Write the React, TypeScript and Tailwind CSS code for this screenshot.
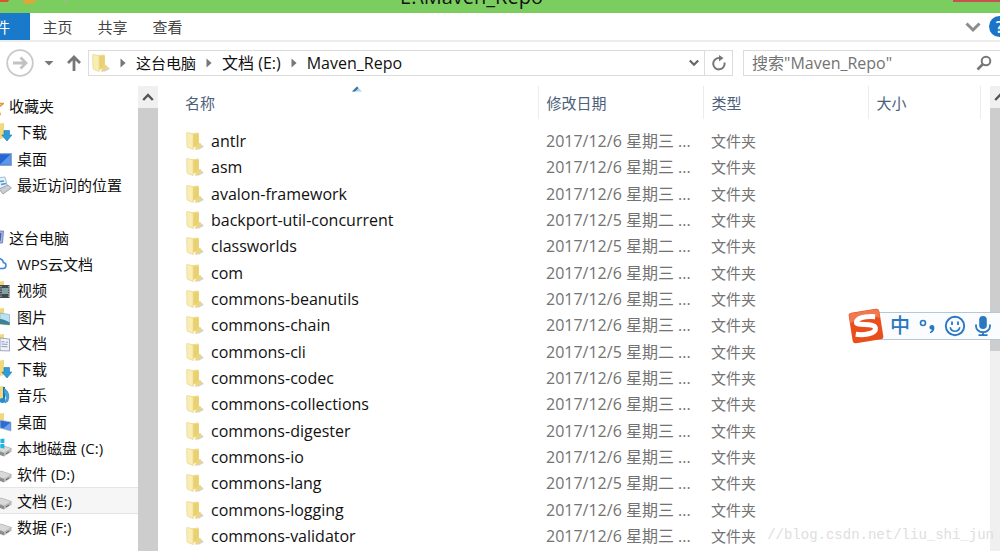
import React from 'react';

type NavIcon = 'star' | 'download' | 'desktop' | 'recent' | 'pc' | 'cloud' | 'video' | 'picture' | 'document' | 'music' | 'desktopFolder' | 'system' | 'drive';

interface NavItem {
  label: string;
  icon: NavIcon;
  root?: boolean;
  active?: boolean;
}

const favorites: NavItem[] = [
  { label: '收藏夹', icon: 'star', root: true },
  { label: '下载', icon: 'download' },
  { label: '桌面', icon: 'desktop' },
  { label: '最近访问的位置', icon: 'recent' },
];

const computer: NavItem[] = [
  { label: '这台电脑', icon: 'pc', root: true },
  { label: 'WPS云文档', icon: 'cloud' },
  { label: '视频', icon: 'video' },
  { label: '图片', icon: 'picture' },
  { label: '文档', icon: 'document' },
  { label: '下载', icon: 'download' },
  { label: '音乐', icon: 'music' },
  { label: '桌面', icon: 'desktopFolder' },
  { label: '本地磁盘 (C:)', icon: 'system' },
  { label: '软件 (D:)', icon: 'drive' },
  { label: '文档 (E:)', icon: 'drive', active: true },
  { label: '数据 (F:)', icon: 'drive' },
];

const DAY_5 = '2017/12/5 星期二 ...';
const DAY_6 = '2017/12/6 星期三 ...';

const folders = [
  { name: 'antlr', date: DAY_6 },
  { name: 'asm', date: DAY_6 },
  { name: 'avalon-framework', date: DAY_6 },
  { name: 'backport-util-concurrent', date: DAY_5 },
  { name: 'classworlds', date: DAY_5 },
  { name: 'com', date: DAY_6 },
  { name: 'commons-beanutils', date: DAY_6 },
  { name: 'commons-chain', date: DAY_6 },
  { name: 'commons-cli', date: DAY_5 },
  { name: 'commons-codec', date: DAY_6 },
  { name: 'commons-collections', date: DAY_6 },
  { name: 'commons-digester', date: DAY_6 },
  { name: 'commons-io', date: DAY_6 },
  { name: 'commons-lang', date: DAY_5 },
  { name: 'commons-logging', date: DAY_6 },
  { name: 'commons-validator', date: DAY_6 },
];

const FolderIcon = () => (
  <svg className="block h-5 w-[18px] shrink-0" viewBox="0 0 18 20">
    <path d="M12 14.5l4-.8 1.8 2.4L13 18.6H9z" fill="#c4c8cd" opacity="0.8" />
    <path d="M5 2.4L12 1.6Q12.800 1.600 12.800 2.400V14.600L6 17.500z" fill="#f0da83" />
    <path d="M7.500 3.500L12.800 3V14L7.500 16z" fill="#e9d070" />
    <path d="M11.500 12.600l3-.6 1.200 3.200-4 2.800-3 .4z" fill="#ecd57a" />
    <path d="M.6 2.200Q.6 1.400 1.400 1.500L6.200 2.600Q7.200 2.900 7.200 4V18.600L1.800 16.400Q1 16 1 15.200z" fill="#f9edb4" stroke="#e6d080" strokeWidth="0.6" />
  </svg>
);

const BackFolder = () => (
  <>
    <path d="M3 2l9-1v15l-9 2z" fill="#f0d87c" />
    <path d="M3 2l5 1.5v15L3 17z" fill="#f8e9a6" />
  </>
);

const DownArrow = () => <path d="M12 8.5h5.500V13h2.400L15 19 9.800 13H12z" fill="#2f9bd8" stroke="#1c78b4" strokeWidth="0.6" />;

const DriveBody = () => (
  <>
    <path d="M2 11l7-4 10.5 3.5L12 15z" fill="#d9d9d9" stroke="#a3a3a3" strokeWidth="0.6" />
    <path d="M2 11l10 4v3.6L2 14.6z" fill="#8e8e8e" />
    <path d="M12 15l7.5-4.5v3.3L12 18.6z" fill="#b7b7b7" />
    <path d="M14 15.8l3-1.8" stroke="#5e5e5e" strokeWidth="1" />
  </>
);

const navIcons: Record<NavIcon, React.ReactNode> = {
  star: <path d="M10 2l2.4 5.4 7 .2-5.2 4 1.8 6.4-6-3.6L4 18l1.6-6.4L1 7.6l6.6-.2z" fill="#fff3d6" stroke="#e09a3a" strokeWidth="1.5" />,
  download: <><BackFolder /><DownArrow /></>,
  desktop: (
    <>
      <path d="M0 4h20v13H0z" fill="#8fa6c6" />
      <path d="M0 5.2h18.6v10.4H0z" fill="#2467d2" />
      <path d="M8 15.6L18.6 5.2v10.4z" fill="#5b97ee" />
    </>
  ),
  recent: (
    <>
      <path d="M4 3l9-1 3 11-10 3z" fill="#e6f1f8" stroke="#8fb0c4" strokeWidth="0.8" />
      <path d="M8 6.5l4-.6M9 9.5l5-1" stroke="#4b9ccb" strokeWidth="1.5" />
      <path d="M7 14l9-4 3.4 3-8.4 6z" fill="#c8ced3" stroke="#838c93" strokeWidth="0.7" />
    </>
  ),
  pc: (
    <>
      <path d="M1 3h18.5l-1 12H1z" fill="#aab4d8" stroke="#6b74a8" strokeWidth="0.8" />
      <path d="M1 5h16.4l-.8 8H1z" fill="#3b62c4" />
    </>
  ),
  cloud: <path d="M5 14.500h5.500a3 3 0 0 0 .8-6A4.500 4.500 0 0 0 3.500 6" fill="none" stroke="#3f83d6" strokeWidth="1.500" />,
  video: (
    <>
      <BackFolder />
      <path d="M8 5h9.5v13H8z" fill="#414a50" />
      <path d="M10 8h6v6h-6z" fill="#7ea2a6" />
      <path d="M9 6v11M16.8 6v11" stroke="#d6dadb" strokeDasharray="1.2 1.2" />
    </>
  ),
  picture: (
    <>
      <BackFolder />
      <path d="M8 6l9.5 1.5V18L8 17z" fill="#b9e0f3" stroke="#98aab5" strokeWidth="0.7" />
      <path d="M8 12q4 0 9.5 3.6V18L8 17z" fill="#3e8a74" />
      <path d="M8 12.5q4 .4 9.5 3.2v1.2L8 14.6z" fill="#3c7cb4" />
    </>
  ),
  document: (
    <>
      <BackFolder />
      <path d="M8 5l9.5 1v12L8 17.6z" fill="#eef1fa" stroke="#8c93ae" strokeWidth="0.8" />
      <path d="M9.5 8.6l3 .3M9.5 11l6 .4M9.5 13.5l6 .3M14 9.2h2" stroke="#8790ad" strokeWidth="0.9" />
    </>
  ),
  music: (
    <>
      <BackFolder />
      <path d="M12 2v12" stroke="#1b77b8" strokeWidth="2" />
      <path d="M12 3q7 5 4 13l-3 2q3-6-1-10z" fill="#46a6dd" stroke="#1b77b8" strokeWidth="0.6" />
      <ellipse cx="10.5" cy="15.5" rx="3" ry="2.4" fill="#2a8cca" />
    </>
  ),
  desktopFolder: (
    <>
      <BackFolder />
      <path d="M8 8l11 2v9L8 16z" fill="#2e6bd0" stroke="#b5c3d9" strokeWidth="0.8" />
      <path d="M11 16.4l7.4-6v8z" fill="#6ba0ec" />
    </>
  ),
  system: (
    <>
      <DriveBody />
      <path d="M4 1.5l3.6-.4v4H4zM8.4 1l4-.5v4.6h-4zM4 6h3.6v4L4 9.6zM8.4 6h4v4.6l-4-.5z" fill="#1fb4e6" />
      <path d="M5 13.6l3 1.2" stroke="#45b649" strokeWidth="1.6" />
    </>
  ),
  drive: <DriveBody />,
};

const NavLink = ({ item }: { item: NavItem }) => (
  <a
    href="#"
    aria-current={item.active ? 'page' : undefined}
    className={
      'flex min-h-0 flex-1 items-center gap-[5px] whitespace-nowrap border-y ' +
      (item.active ? 'border-[#e4e4e4] bg-[#f6f6f6]' : 'border-transparent')
    }
  >
    <svg className={'h-5 w-5 shrink-0 ' + (item.root ? '-ml-4' : '-ml-2')} viewBox="0 0 20 20">
      {navIcons[item.icon]}
    </svg>
    {item.label}
  </a>
);

const CrumbArrow = () => (
  <svg className="h-2.5 w-1.5 shrink-0" viewBox="0 0 6 10">
    <path d="M.5 0.5L5.6 5 .5 9.5z" fill="#777" />
  </svg>
);

const ScrollUp = () => (
  <button aria-label="向上滚动" className="flex h-[22px] w-5 shrink-0 items-center justify-center bg-[#f0f0f0]">
    <svg className="h-2.5 w-3" viewBox="0 0 12 10" fill="none" stroke="#555" strokeWidth="2.4">
      <path d="M1.2 8L6 3l4.8 5" />
    </svg>
  </button>
);

const ImeBar = () => (
  <div className="absolute right-0 top-[308px] flex h-9 w-[152px] items-center">
    <div className="absolute inset-y-1 left-4 right-0 border-y border-[#b4c8d8] bg-[#fafcfe]" />
    <svg className="relative h-9 w-9 shrink-0" viewBox="0 0 36 36">
      <g transform="rotate(-9 18 18)">
        <rect x="2.5" y="2.5" width="31" height="31" rx="3" fill="#e94e1b" />
        <path d="M3 5.500Q3 3 5.500 3H30.500Q33 3 33 5.500V12Q18 4 3 13z" fill="#f0794f" />
        <path d="M28.500 10.200Q12 6.800 9.200 12.400C7.600 17 26.600 15.600 27 21.400 26.800 27.400 14 26.800 6.600 24.600" fill="none" stroke="#fff" strokeWidth="5" />
      </g>
    </svg>
    <button className="relative ml-1 w-6 text-center text-[20px] font-medium leading-7 text-[#2a78c2]">中</button>
    <button aria-label="中文标点" className="relative ml-1.5">
      <svg className="h-5 w-5" viewBox="0 0 20 20">
        <circle cx="5" cy="7" r="2.500" fill="none" stroke="#2a78c2" strokeWidth="1.600" />
        <path d="M12.800 9.200q3.600-.8 3.600 2.800 0 4-4.200 5.200l-.4-1.200q2-.8 2-2.600-2.400.2-2.400-2 0-1.800 1.400-2.200z" fill="#2a78c2" />
      </svg>
    </button>
    <button aria-label="表情" className="relative ml-1.5">
      <svg className="h-[22px] w-[22px]" viewBox="0 0 22 22" fill="none" stroke="#2a78c2">
        <circle cx="11" cy="11" r="9.200" strokeWidth="1.900" />
        <path d="M8 6.500v3.500M14 6.500v3.500" strokeWidth="1.800" />
        <path d="M6.200 12.200q1 4 4.800 4t4.800-4" strokeWidth="1.600" />
      </svg>
    </button>
    <button aria-label="语音输入" className="relative ml-2">
      <svg className="h-[22px] w-[18px]" viewBox="0 0 18 22">
        <rect x="5.200" y="1" width="7.600" height="13" rx="3.800" fill="#2a78c2" />
        <path d="M2 9.500v1.700a7 6 0 0 0 14 0V9.500M9 17v3M4.500 20.200h9" fill="none" stroke="#2a78c2" strokeWidth="1.800" />
      </svg>
    </button>
  </div>
);

const App: React.FC = () => {
  return (
    <div className="relative flex h-screen flex-col overflow-hidden bg-white font-['Open_Sans','Noto_Sans_CJK_SC',sans-serif] text-[15px] leading-5 text-[#111]">
      {/* Title bar */}
      <header className="relative flex h-[13px] shrink-0 items-end justify-center overflow-hidden bg-[#7bcd60]">
        <svg className="absolute left-0 top-0 h-1.5 w-[70px]" viewBox="0 0 70 6">
          <path d="M0 0h9l-1 2H0z" fill="#d9532c" />
          <path d="M23 0h11l3 2-7 2h-6z" fill="#d9a93c" />
          <path d="M65.500 0v4" stroke="#a9b3a2" />
        </svg>
        <h1 className="mb-1 mr-[57px] text-[20px] leading-6">E:\Maven_Repo</h1>
        <button aria-label="关闭" className="absolute right-0 top-0 h-0.5 w-[47px] bg-[#c75050]" />
      </header>

      {/* Ribbon tabs */}
      <nav className="flex h-[29px] shrink-0 items-stretch border-b-2 border-[#ececec] text-[#444]">
        <button className="-ml-5 w-[50px] whitespace-nowrap bg-[#1979ca] text-left text-white">文件</button>
        <button className="w-[55px]">主页</button>
        <button className="w-[55px]">共享</button>
        <button className="w-[55px]">查看</button>
        <div className="-mr-2.5 ml-auto flex items-center gap-2">
          <button aria-label="展开功能区">
            <svg className="h-3 w-4" viewBox="0 0 16 12" fill="none" stroke="#8c8c8c" strokeWidth="3">
              <path d="M1.500 2.500L8 9l6.500-6.500" />
            </svg>
          </button>
          <button aria-label="帮助" className="h-[21px] w-[21px] rounded-full bg-[#1b74c9] text-[16px] font-semibold text-white">?</button>
        </div>
      </nav>

      {/* Address row */}
      <div className="flex h-11 shrink-0 items-center pb-0.5">
        <button aria-label="前进" className="ml-1.5">
          <svg className="h-7 w-7" viewBox="0 0 28 28" fill="none">
            <circle cx="14" cy="14" r="12.800" stroke="#c9c9c9" strokeWidth="1.800" />
            <path d="M7 14h12M14.500 8.500L20 14l-5.500 5.500" stroke="#c2c2c2" strokeWidth="2.800" />
          </svg>
        </button>
        <button aria-label="最近浏览的位置" className="ml-2.5">
          <svg className="h-2 w-2.5" viewBox="0 0 10 8">
            <path d="M.5 2h9L5 6.500z" fill="#777" />
          </svg>
        </button>
        <button aria-label="上移" className="ml-3">
          <svg className="h-[18px] w-4" viewBox="0 0 16 18" fill="none" stroke="#777" strokeWidth="2.800">
            <path d="M8 17V3M2 9l6-6 6 6" />
          </svg>
        </button>
        <div className="ml-1.5 flex h-[26px] flex-1 items-center border border-[#dcdcdc]">
          <div className="ml-[3px] flex flex-1 items-center gap-2.5 whitespace-nowrap">
            <FolderIcon />
            <CrumbArrow />
            <button>这台电脑</button>
            <CrumbArrow />
            <button className="text-[16px]">文档 (E:)</button>
            <CrumbArrow />
            <button className="text-[16px]">Maven_Repo</button>
          </div>
          <button aria-label="以前的位置" className="flex w-5 justify-center">
            <svg className="h-2 w-2.5" viewBox="0 0 10 8" fill="none" stroke="#666" strokeWidth="2.200">
              <path d="M.8 1.500L5 5.800l4.200-4.300" />
            </svg>
          </button>
          <button aria-label="刷新" className="flex h-full w-7 items-center justify-center border-l border-[#dcdcdc]">
            <svg className="h-4 w-4" viewBox="0 0 16 16" fill="none" stroke="#777" strokeWidth="2">
              <path d="M13.500 7.500A5.700 5.700 0 1 1 8.500 3" />
              <path d="M8 0l4.500 3L8 6.500z" fill="#777" stroke="none" />
            </svg>
          </button>
        </div>
        <div className="ml-2.5 flex h-[26px] w-[257px] items-center border border-r-0 border-[#dcdcdc]">
          <label htmlFor="search" className="sr-only">搜索</label>
          <input id="search" type="text" placeholder={'搜索"Maven_Repo"'} className="ml-2 min-w-0 flex-1 bg-transparent text-[16px] leading-5 outline-none placeholder:text-[#737373]" />
          <button aria-label="搜索" className="mr-2">
            <svg className="h-4 w-4" viewBox="0 0 16 16" fill="none" stroke="#777" strokeWidth="2">
              <circle cx="10" cy="6" r="4.300" />
              <path d="M7 9l-5.500 5.500" strokeWidth="2.600" />
            </svg>
          </button>
        </div>
      </div>

      <div className="flex min-h-0 flex-1">
        {/* Navigation pane */}
        <aside className="w-[138px] shrink-0 pt-[7px]">
          <div className="flex h-[447px] flex-col">
            {favorites.map((item) => <NavLink key={item.label} item={item} />)}
            <div className="flex-1 border-y border-transparent" />
            {computer.map((item) => <NavLink key={item.label} item={item} />)}
          </div>
        </aside>
        <div className="flex w-5 shrink-0 flex-col">
          <ScrollUp />
          <div className="flex-1 bg-[#cdcdcd]" />
        </div>

        {/* File list */}
        <main className="relative min-w-0 flex-1 overflow-hidden">
          <svg className="absolute left-[194px] top-0 h-1.5 w-2.5" viewBox="0 0 10 6">
            <path d="M0 5.500L5 .5l5 5z" fill="#a9d3ee" />
            <path d="M0 5.500L5 .5l1.500 1.500L3 5.500z" fill="#3f7296" />
          </svg>
          <table className="w-full table-fixed border-collapse text-left">
            <colgroup>
              <col />
              <col className="w-[165px]" />
              <col className="w-[165px]" />
              <col className="w-[112px]" />
              <col className="w-2.5" />
            </colgroup>
            <thead className="text-[#4c607a]">
              <tr className="h-[33px]">
                <th className="border-r border-[#ececec] p-0 pl-[27px] font-normal">名称</th>
                <th className="border-r border-[#ececec] p-0 pl-2 font-normal">修改日期</th>
                <th className="border-r border-[#ececec] p-0 pl-2 font-normal">类型</th>
                <th className="border-r border-[#ececec] p-0 pl-2 font-normal">大小</th>
                <th className="p-0" />
              </tr>
            </thead>
          </table>
          <table className="mt-[9px] h-[421px] w-full table-fixed border-collapse text-left">
            <colgroup>
              <col />
              <col className="w-[165px]" />
              <col className="w-[287px]" />
            </colgroup>
            <tbody>
              {folders.map(({ name, date }) => (
                <tr key={name}>
                  <td className="p-0 pl-7 text-[16px] leading-5">
                    <div className="flex items-center gap-[7px]">
                      <FolderIcon />
                      {name}
                    </div>
                  </td>
                  <td className="whitespace-nowrap p-0 pl-2 text-[16px] leading-5 text-[#737373]">{date}</td>
                  <td className="p-0 pl-2 text-[#737373]">文件夹</td>
                </tr>
              ))}
            </tbody>
          </table>
        </main>
        <div className="flex w-2.5 shrink-0 flex-col overflow-hidden bg-[#f0f0f0]">
          <ScrollUp />
          <div className="h-[243px] bg-[#cdcdcd]" />
        </div>
      </div>

      <ImeBar />
      <div className="absolute bottom-1.5 right-1.5 font-['Liberation_Mono',monospace] text-[14px] leading-5 text-[#dedede]">//blog.csdn.net/liu_shi_jun</div>
    </div>
  );
};

export default App;
